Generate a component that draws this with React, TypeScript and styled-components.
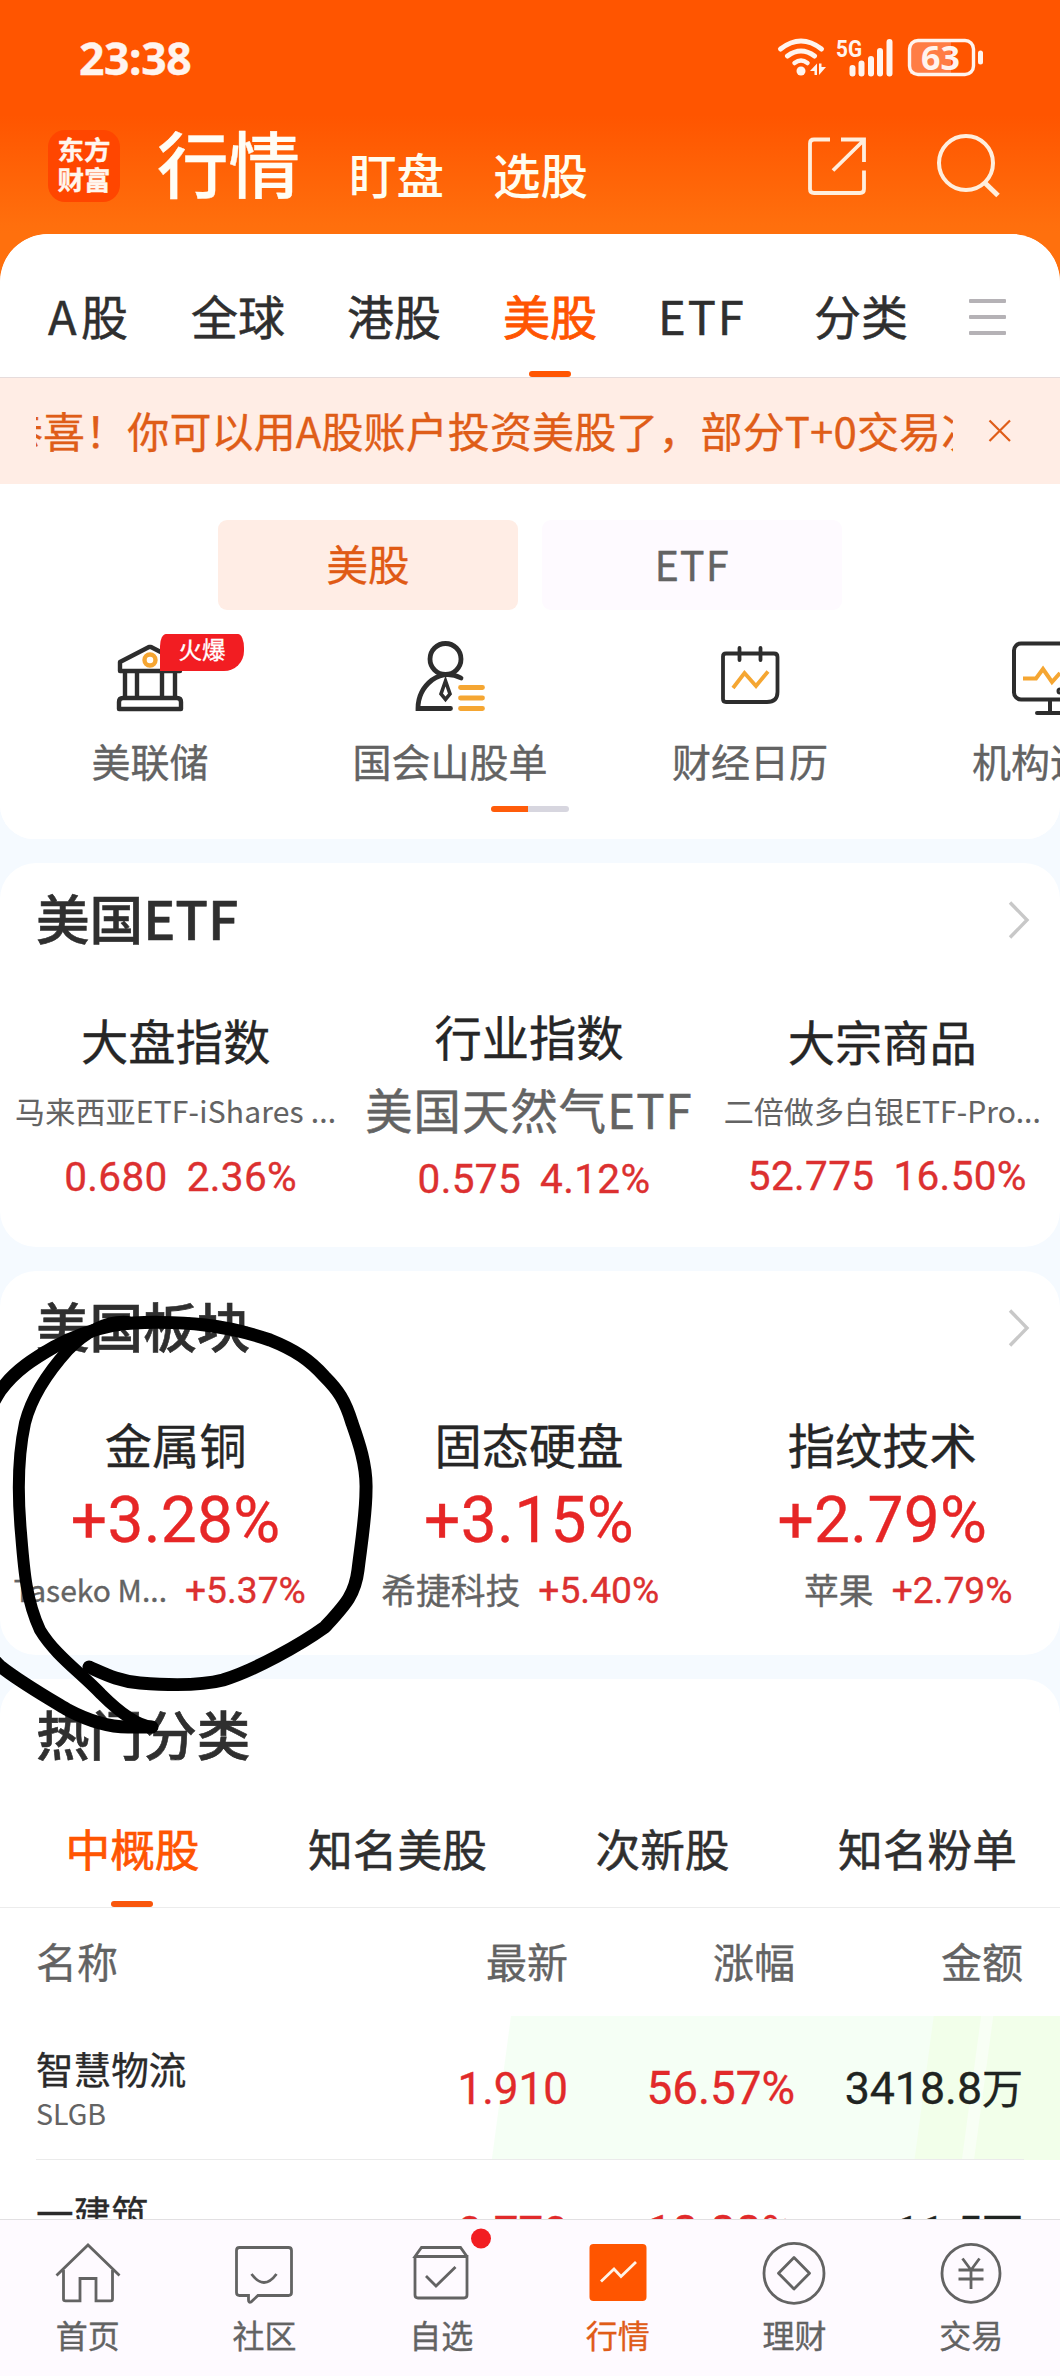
import React from 'react';
import styled, { createGlobalStyle } from 'styled-components';

const CJK = '"Noto Sans CJK SC", "Noto Sans", sans-serif';
const NUM = 'Roboto, "Noto Sans CJK SC", sans-serif';
const ORANGE = '#ff5502';
const RED = '#e12a2a';
const INK = '#2f2f2f';
const GREY = '#636363';

const Global = createGlobalStyle`
  *, *::before, *::after { box-sizing: border-box; }
  body { margin: 0; background: #f5faff; font-family: ${CJK}; }
`;

const Phone = styled.div`
  position: relative;
  width: 1060px;
  height: 2376px;
  overflow: hidden;
  display: flex;
  flex-direction: column;
  background: #f5faff;
  -webkit-text-stroke: 0.35px currentColor;
`;

const Scroll = styled.main`
  height: 2219px;
  overflow: hidden;
  flex: none;
`;

const Hero = styled.div`
  background: linear-gradient(#ff5500 0, #ff5500 115px, #ff6f0d 225px, #ff700d 100%);
`;

const StatusBar = styled.div`
  height: 116px;
  display: flex;
  justify-content: space-between;
  padding: 20px 60px 0 79px;
`;

const Clock = styled.div`
  font: 700 44.5px/76px "Noto Sans", sans-serif;
  color: #fff4ee;
  letter-spacing: -0.4px;
`;

const NavBar = styled.header`
  height: 118px;
  display: flex;
  align-items: flex-start;
  padding-left: 48px;
`;

const Logo = styled.div`
  width: 72px;
  height: 72px;
  margin-top: 14px;
  border-radius: 17px;
  background: #ff4600;
  color: #fff6ee;
  font-size: 26.5px;
  font-weight: 700;
  line-height: 30px;
  text-align: center;
  padding-top: 4px;
`;

const Heading = styled.h1`
  margin: 9px 0 0 37px;
  font-size: 71.5px;
  font-weight: 500;
  line-height: 72px;
  color: #fffdf5;
`;

const NavLink = styled.span<{ $gap: number }>`
  margin: 34px 0 0 ${p => p.$gap}px;
  font-size: 47.5px;
  font-weight: 500;
  line-height: 48px;
  color: #fffdf0;
  -webkit-text-stroke: 0;
`;

const NavIcons = styled.div`
  display: flex;
  gap: 61px;
  margin: 15px 0 0 216px;
`;

const Sheet = styled.section`
  height: 605px;
  background: #fff;
  border-radius: 48px 48px 0 0;
  overflow: hidden;
`;

const SheetWrap = styled.div`
  background: #fff;
  border-radius: 48px 48px 34px 34px;
  overflow: hidden;
`;

const HeroBase = styled.div`
  background: linear-gradient(#ff700d 0, #ff700d 300px, #f5faff 300px);
`;

const MarketTabs = styled.nav`
  height: 144px;
  display: flex;
  align-items: center;
  padding: 18px 0 0 48px;
  border-bottom: 1px solid #e6dcdc;
`;

const MarketTab = styled.span<{ $w: number; $active?: boolean; $ls?: number }>`
  position: relative;
  width: ${p => p.$w}px;
  font-size: 47px;
  line-height: 48px;
  letter-spacing: ${p => p.$ls || 0}px;
  color: ${p => (p.$active ? ORANGE : INK)};
  -webkit-text-stroke-width: ${p => (p.$active ? 0.9 : 0.5)}px;
  &::after {
    content: '';
    display: ${p => (p.$active ? 'block' : 'none')};
    position: absolute;
    left: 26px;
    top: 80px;
    width: 42px;
    height: 6px;
    border-radius: 3px;
    background: ${ORANGE};
  }
`;

const Menu = styled.div`
  display: flex;
  flex-direction: column;
  gap: 12px;
  width: 37px;
  padding-top: 5px;
  i { height: 4px; border-radius: 1px; background: #b5b2b6; }
`;

const Notice = styled.div`
  height: 106px;
  background: #ffede5;
  display: flex;
  align-items: center;
  padding: 0 48px 0 36px;
  justify-content: space-between;
`;

const Marquee = styled.div`
  width: 917px;
  height: 60px;
  overflow: hidden;
  white-space: nowrap;
  color: #df5d18;
  font-size: 42px;
  line-height: 58px;
  letter-spacing: 0.12px;
  span { margin-left: -35px; }
`;

const Toggle = styled.div`
  display: flex;
  justify-content: center;
  gap: 24px;
  padding-top: 36px;
`;

const ToggleButton = styled.div<{ $active?: boolean }>`
  width: 300px;
  height: 90px;
  border-radius: 9px;
  text-align: center;
  font-size: 41.5px;
  line-height: 87px;
  letter-spacing: ${p => (p.$active ? 0 : 1)}px;
  background: ${p => (p.$active ? '#ffede5' : '#fefaff')};
  color: ${p => (p.$active ? '#e05a14' : GREY)};
`;

const Shortcuts = styled.div`
  display: grid;
  grid-template-columns: repeat(4, 300px);
  width: 1200px;
  padding-top: 24px;
`;

const Shortcut = styled.div`
  position: relative;
  display: flex;
  flex-direction: column;
  align-items: center;
  font-size: 39px;
  line-height: 48px;
  color: ${GREY};
  svg { margin-bottom: 12px; }
`;

const Badge = styled.em`
  position: absolute;
  left: 160px;
  top: 0;
  width: 84px;
  height: 37px;
  border-radius: 6px 6px 20px 0;
  border-top-left-radius: 6px 12px;
  border-top-right-radius: 6px 14px;
  background: #f21d22;
  color: #fff;
  font: normal 23.5px/30px ${CJK};
  text-align: center;
`;

const Pager = styled.div`
  width: 78px;
  height: 6px;
  border-radius: 3px;
  margin: 22px auto 0;
  background: linear-gradient(90deg, #ff5c0a 37px, #d7d6df 37px);
`;

const Card = styled.section`
  height: 384px;
  margin-top: 24px;
  border-radius: 36px;
  background: #fff;
`;

const HotCard = styled(Card)`
  height: 700px;
`;

const CardHead = styled.div`
  height: 114px;
  padding: 0 29px 0 36px;
  display: flex;
  justify-content: space-between;
  align-items: center;
  h2 {
    margin: -6px 0 0;
    font-size: 53.6px;
    line-height: 54px;
    font-weight: 500;
    color: ${INK};
    -webkit-text-stroke: 0.6px ${INK};
  }
`;

const Columns = styled.div`
  display: grid;
  grid-template-columns: repeat(3, 1fr);
`;

const Column = styled.div<{ $top: number }>`
  display: flex;
  flex-direction: column;
  align-items: center;
  padding: ${p => p.$top}px 2px 0 0;
  min-width: 0;
  white-space: nowrap;
`;

const ColName = styled.div`
  font-size: 47.3px;
  line-height: 48px;
  color: #262626;
`;

const FundName = styled.div<{ $size: number; $mt: number; $ls: number }>`
  margin-top: ${p => p.$mt}px;
  font-size: ${p => p.$size}px;
  line-height: 48px;
  letter-spacing: ${p => p.$ls}px;
  color: ${GREY};
  -webkit-text-stroke-width: ${p => (p.$size > 40 ? 0.5 : 0.1)}px;
`;

const Quote = styled.div<{ $mt: number }>`
  margin-top: ${p => p.$mt}px;
  padding-left: 10px;
  display: flex;
  gap: 19px;
  font: 400 40.5px/48px ${NUM};
  letter-spacing: 0.35px;
  color: #dc3030;
`;

const BigPct = styled.div`
  margin-top: 18px;
  font: 400 64px/70px ${NUM};
  letter-spacing: 0.3px;
  color: #e62626;
`;

const Leader = styled.div<{ $small?: boolean }>`
  align-self: stretch;
  display: flex;
  margin-top: 12px;
  line-height: 43px;
  span {
    width: 167px;
    text-align: right;
    font-size: ${p => (p.$small ? 30 : 34.8)}px;
    color: ${GREY};
  }
  b {
    margin-left: 18px;
    font: 400 37.2px/44px ${NUM};
    color: #dc3030;
  }
`;

const CategoryTabs = styled.nav`
  display: grid;
  grid-template-columns: repeat(4, 265px);
  height: 115px;
  border-bottom: 1px solid #ececec;
`;

const CategoryTab = styled.span<{ $active?: boolean }>`
  position: relative;
  text-align: center;
  font-size: 44.7px;
  line-height: 109px;
  color: ${p => (p.$active ? ORANGE : INK)};
  -webkit-text-stroke-width: ${p => (p.$active ? 0.7 : 0.5)}px;
  &::after {
    content: '';
    display: ${p => (p.$active ? 'block' : 'none')};
    position: absolute;
    left: 111px;
    bottom: 0;
    width: 42px;
    height: 6px;
    border-radius: 3px;
    background: #f9560c;
  }
`;

const TableHead = styled.div`
  display: grid;
  grid-template-columns: 304px 228px 227px 228px;
  height: 108px;
  padding: 0 36px;
  font-size: 41px;
  line-height: 104px;
  color: ${GREY};
  span + span { text-align: right; }
`;

const StockRow = styled.div<{ $glow?: boolean }>`
  height: 144px;
  ${p =>
    p.$glow &&
    `background:
      linear-gradient(97.6deg, transparent 506px, #f5fff5 507px, #f5fff5 925px, #f2ffea 926px, #f2ffea 972px, #f8fff5 973px, #f8fff5 984px, #f2ffea 985px);`}
`;

const StockInner = styled.div`
  display: grid;
  grid-template-columns: 304px 228px 227px 228px;
  height: 144px;
  margin: 0 36px;
  border-bottom: 1px solid #ebebeb;
`;

const StockName = styled.div`
  padding: 32px 0 0 0;
  font-size: 37.6px;
  line-height: 40px;
  color: #2a2a2a;
  small {
    display: block;
    margin-top: 10px;
    font-size: 28.5px;
    line-height: 30px;
    color: ${GREY};
    -webkit-text-stroke-width: 0.1px;
  }
`;

const Cell = styled.div<{ $color: string; $size: number }>`
  text-align: right;
  white-space: nowrap;
  font: 400 ${p => p.$size}px/146px ${NUM};
  color: ${p => p.$color};
  span { font-size: 41px; }
`;

const TabBar = styled.footer`
  height: 157px;
  flex: none;
  display: grid;
  grid-template-columns: repeat(6, 1fr);
  border-top: 1px solid #e2e0e2;
  background: #fefaff;
`;

const TabItem = styled.div<{ $active?: boolean }>`
  display: flex;
  flex-direction: column;
  align-items: center;
  padding: 16px 1px 0 0;
  font-size: 32px;
  line-height: 36px;
  color: ${p => (p.$active ? '#e05c18' : GREY)};
  svg { overflow: visible; }
`;

const Scribble = styled.svg`
  position: absolute;
  left: 0;
  top: 1300px;
`;

const Chevron = () => (
  <svg width="24" height="40" viewBox="0 0 24 40" fill="none" stroke="#c8c8c8" strokeWidth="3.4">
    <path d="M3 2.5L20 20L3 37.5" />
  </svg>
);

const StatusIcons = () => (
  <svg width="224" height="60" viewBox="16 0 224 60" fill="none" stroke="#fff4ee" strokeLinecap="round">
    <path d="M20.5 29Q41 13 61.500 29" strokeWidth="5" />
    <path d="M27.500 36Q41 26 54.500 36" strokeWidth="5" />
    <path d="M34.500 43Q41 38 47.500 43" strokeWidth="4.500" />
    <circle cx="41" cy="51" r="4.500" fill="#fff4ee" stroke="none" />
    <path d="M50 51L57 43.500V55H54.500V51ZM59 43.500H61.500V47H66L59 55Z" fill="#fff4ee" stroke="none" />
    <text x="76" y="37" fill="#fff4ee" stroke="none" fontFamily="Roboto, sans-serif" fontWeight="700" fontSize="24" textLength="26" lengthAdjust="spacingAndGlyphs">5G</text>
    <path d="M92.500 48V53.500M101.500 43.500V53.500M111 39V53.500M120 31V53.500M129.500 22V53.500" strokeWidth="6" />
    <rect x="150" y="22" width="41" height="32" fill="#ff7d45" stroke="none" />
    <rect x="149.500" y="20.500" width="64" height="34" rx="8.500" strokeWidth="3.400" />
    <path d="M220.500 33V42" strokeWidth="5" />
    <text x="161" y="50" fill="#fff4ee" stroke="none" fontFamily="Noto Sans, sans-serif" fontWeight="700" fontSize="34">63</text>
  </svg>
);

const BankIcon = () => (
  <svg width="80" height="90" viewBox="110 634 80 90" fill="none" stroke="#2d2d2d" strokeWidth="4.400" strokeLinejoin="round">
    <path d="M120 671V662L149 647H151L180 662V671Z" />
    <path d="M125 672V698M137 672V698M162 672V698M175 672V698" />
    <path d="M119 709V702Q119 698 123 698H177Q181 698 181 702V709Z" />
    <circle cx="150" cy="660" r="5.500" stroke="#f5a632" />
  </svg>
);

const PersonIcon = () => (
  <svg width="80" height="90" viewBox="410 634 80 90" fill="none" stroke="#2d2d2d" strokeWidth="4.800" strokeLinecap="round">
    <circle cx="445.500" cy="659" r="15.500" />
    <path d="M461 678Q446 670 432 680Q418 691 418 708.500H450.500" />
    <path d="M445.500 681L441 694L445.500 699.500L450 694Z" strokeWidth="3.600" />
    <path d="M460.500 687.500H482.500M460.500 698H482.500M460.500 708.500H482.500" stroke="#f5a632" strokeWidth="4.800" />
  </svg>
);

const CalendarIcon = () => (
  <svg width="80" height="90" viewBox="710 634 80 90" fill="none" stroke="#2d2d2d" strokeWidth="3.800" strokeLinecap="round">
    <path d="M726 653.500H774Q777.500 653.500 777.500 657V692Q777.500 702 767 702H726Q723 702 723 699V656.500Q723 653.500 726 653.500Z" />
    <path d="M739.500 648V660M760.500 648V660" />
    <path d="M733 688L744.500 673L756 686L768 671.500" stroke="#f5a632" strokeLinecap="butt" />
  </svg>
);

const MonitorIcon = () => (
  <svg width="80" height="90" viewBox="1010 634 80 90" fill="none" stroke="#2d2d2d" strokeWidth="4" strokeLinecap="round">
    <rect x="1014" y="643.500" width="72" height="56" rx="7" />
    <path d="M1050 700V712M1037 713H1063" />
    <path d="M1023 678.500H1036L1043 669L1052 682L1060 673" stroke="#f5a632" strokeLinecap="butt" />
    <circle cx="1060" cy="691" r="1.500" />
  </svg>
);

const tabSvg = { width: 80, height: 80, fill: 'none', stroke: '#636363', strokeWidth: 2.8 };
const tabs = [
  { label: '首页', art: <path d="M-31.500 39.500L0 9L31.500 39.500M-24.500 34V63Q-24.500 64.800-22.500 64.800H-8V42.500H8V64.800H22.500Q24.500 64.800 24.500 63V34" /> },
  { label: '社区', art: <path d="M-24.500 11.500H24.500Q27.500 11.500 27.500 14.500V56.500Q27.500 59.500 24.500 59.500H-6L-13 66Q-15.500 67-15.500 64V59.500H-24.500Q-27.500 59.500-27.500 56.500V14.500Q-27.500 11.500-24.500 11.500ZM-12.500 38Q0 55 12.500 38" /> },
  { label: '自选', art: <><path d="M-26 20.500V59Q-26 62-23 62H23Q26 62 26 59V20.500H-26L-19.500 11.500H19.500L26 20.500M-15 40L-5 50L14.500 31" /><circle cx="40" cy="2.500" r="10" fill="#f21d22" stroke="none" /></> },
  { label: '行情', active: true, art: <><rect x="-28.500" y="8" width="57" height="57" rx="4" fill="#ff5500" stroke="none" /><path d="M-17 45.500L-4 33L3 40.500L18 26" stroke="#fff3e6" strokeWidth="2.800" /></> },
  { label: '理财', art: <><circle cx="0" cy="37.300" r="30" /><path d="M0 21.500L15.500 37.300L0 53L-15.500 37.300Z" strokeLinejoin="round" /></> },
  { label: '交易', art: <><circle cx="0" cy="37.300" r="29" /><path d="M-8.500 22.500L0 34L8.500 22.500M0 34V53M-12.500 34H12.500M-12.500 43H12.500" /></> },
];

const sectors = [
  { name: '金属铜', pct: '+3.28%', lead: 'Taseko M...', leadPct: '+5.37%', small: true },
  { name: '固态硬盘', pct: '+3.15%', lead: '希捷科技', leadPct: '+5.40%' },
  { name: '指纹技术', pct: '+2.79%', lead: '苹果', leadPct: '+2.79%' },
];

const stocks = [
  { name: '智慧物流', code: 'SLGB', last: '1.910', pct: '56.57%', amount: '3418.8', glow: true },
  { name: '一建筑', code: 'ONEG', last: '0.770', pct: '18.88%', amount: '11.5', glow: false },
];

export default function App() {
  return (
    <Phone>
      <Global />
      <Scroll>
        <Hero>
          <StatusBar>
            <Clock>23:38</Clock>
            <StatusIcons />
          </StatusBar>
          <NavBar>
            <Logo>东方<br />财富</Logo>
            <Heading>行情</Heading>
            <NavLink $gap={49}>盯盘</NavLink>
            <NavLink $gap={49}>选股</NavLink>
            <NavIcons>
              <svg width="70" height="70" viewBox="805 131 70 70" fill="none" stroke="#ffeedd" strokeWidth="3.800">
                <path d="M831 139.500H815Q811 139.500 811 143.500V189Q811 193 815 193H861Q865 193 865 189V170.500M842 139.500H865V162M864 141L834 170.500" />
              </svg>
              <svg width="70" height="70" viewBox="936 131 70 70" fill="none" stroke="#ffeedd" strokeWidth="4">
                <circle cx="967" cy="163" r="27" />
                <path d="M985 182L999 195.500" strokeWidth="5" />
              </svg>
            </NavIcons>
          </NavBar>
        </Hero>
        <HeroBase>
          <SheetWrap>
            <Sheet>
              <MarketTabs>
                <MarketTab $w={143} $ls={4.5}>A股</MarketTab>
                <MarketTab $w={156}>全球</MarketTab>
                <MarketTab $w={156}>港股</MarketTab>
                <MarketTab $w={155} $active>美股</MarketTab>
                <MarketTab $w={156} $ls={2}>ETF</MarketTab>
                <MarketTab $w={155}>分类</MarketTab>
                <Menu><i /><i /><i /></Menu>
              </MarketTabs>
              <Notice>
                <Marquee><span>恭喜！你可以用A股账户投资美股了，部分T+0交易次日</span></Marquee>
                <svg width="24" height="24" viewBox="0 0 24 24" stroke="#df5d18" strokeWidth="2.200"><path d="M1.500 1.500L22 22M22 1.500L1.500 22" /></svg>
              </Notice>
              <Toggle>
                <ToggleButton $active>美股</ToggleButton>
                <ToggleButton>ETF</ToggleButton>
              </Toggle>
              <Shortcuts>
                <Shortcut><BankIcon />美联储<Badge>火爆</Badge></Shortcut>
                <Shortcut><PersonIcon />国会山股单</Shortcut>
                <Shortcut><CalendarIcon />财经日历</Shortcut>
                <Shortcut><MonitorIcon />机构追踪</Shortcut>
              </Shortcuts>
              <Pager />
            </Sheet>
          </SheetWrap>
        </HeroBase>

        <Card>
          <CardHead><h2>美国ETF</h2><Chevron /></CardHead>
          <Columns>
            <Column $top={39}>
              <ColName>大盘指数</ColName>
              <FundName $size={30} $mt={22} $ls={0.2}>马来西亚ETF-iShares ...</FundName>
              <Quote $mt={19}><span>0.680</span><span>2.36%</span></Quote>
            </Column>
            <Column $top={35}>
              <ColName>行业指数</ColName>
              <FundName $size={47.3} $mt={25} $ls={1.1}>美国天然气ETF</FundName>
              <Quote $mt={22}><span>0.575</span><span>4.12%</span></Quote>
            </Column>
            <Column $top={40}>
              <ColName>大宗商品</ColName>
              <FundName $size={30} $mt={21} $ls={0.1}>二倍做多白银ETF-Pro...</FundName>
              <Quote $mt={18}><span>52.775</span><span>16.50%</span></Quote>
            </Column>
          </Columns>
        </Card>

        <Card>
          <CardHead><h2>美国板块</h2><Chevron /></CardHead>
          <Columns>
            {sectors.map(s => (
              <Column $top={35} key={s.name}>
                <ColName>{s.name}</ColName>
                <BigPct>{s.pct}</BigPct>
                <Leader $small={s.small}><span>{s.lead}</span><b>{s.leadPct}</b></Leader>
              </Column>
            ))}
          </Columns>
        </Card>

        <HotCard>
          <CardHead><h2>热门分类</h2></CardHead>
          <CategoryTabs>
            <CategoryTab $active>中概股</CategoryTab>
            <CategoryTab>知名美股</CategoryTab>
            <CategoryTab>次新股</CategoryTab>
            <CategoryTab>知名粉单</CategoryTab>
          </CategoryTabs>
          <TableHead><span>名称</span><span>最新</span><span>涨幅</span><span>金额</span></TableHead>
          {stocks.map(s => (
            <StockRow $glow={s.glow} key={s.name}>
              <StockInner>
                <StockName>{s.name}<small>{s.code}</small></StockName>
                <Cell $color={RED} $size={44}>{s.last}</Cell>
                <Cell $color={RED} $size={45.8}>{s.pct}</Cell>
                <Cell $color="#1f2421" $size={44.7}>{s.amount}<span>万</span></Cell>
              </StockInner>
            </StockRow>
          ))}
        </HotCard>
      </Scroll>

      <TabBar>
        {tabs.map(t => (
          <TabItem $active={t.active} key={t.label}>
            <svg {...tabSvg} viewBox="-40 0 80 80">{t.art}</svg>
            {t.label}
          </TabItem>
        ))}
      </TabBar>

      <Scribble width="400" height="450" viewBox="0 1300 400 450" fill="none" stroke="#000" strokeWidth="13" strokeLinecap="round" strokeLinejoin="round">
        <path d="M89 1667C105 1674 118 1681 140 1683C165 1685 200 1686 223 1680C255 1670 300 1645 325 1627C345 1605 355 1595 358 1570C361 1545 366 1515 366 1490C367 1465 358 1440 352 1423C345 1400 338 1390 325 1377C310 1360 295 1350 270 1340C250 1333 230 1328 205 1325C180 1322 140 1321 115 1325C90 1330 70 1338 54 1347C35 1358 15 1370 0 1391C-50 1470-50 1620 0 1666C20 1682 48 1698 68 1710C85 1719 105 1727 128 1727L152 1727" />
        <path d="M152 1727C135 1725 115 1708 101 1694C80 1672 55 1655 40 1630C26 1600 24 1570 21 1533C18 1500 17 1460 25 1423C32 1395 50 1370 68 1350C85 1333 105 1320 128 1322" strokeWidth="12" />
      </Scribble>
    </Phone>
  );
}
